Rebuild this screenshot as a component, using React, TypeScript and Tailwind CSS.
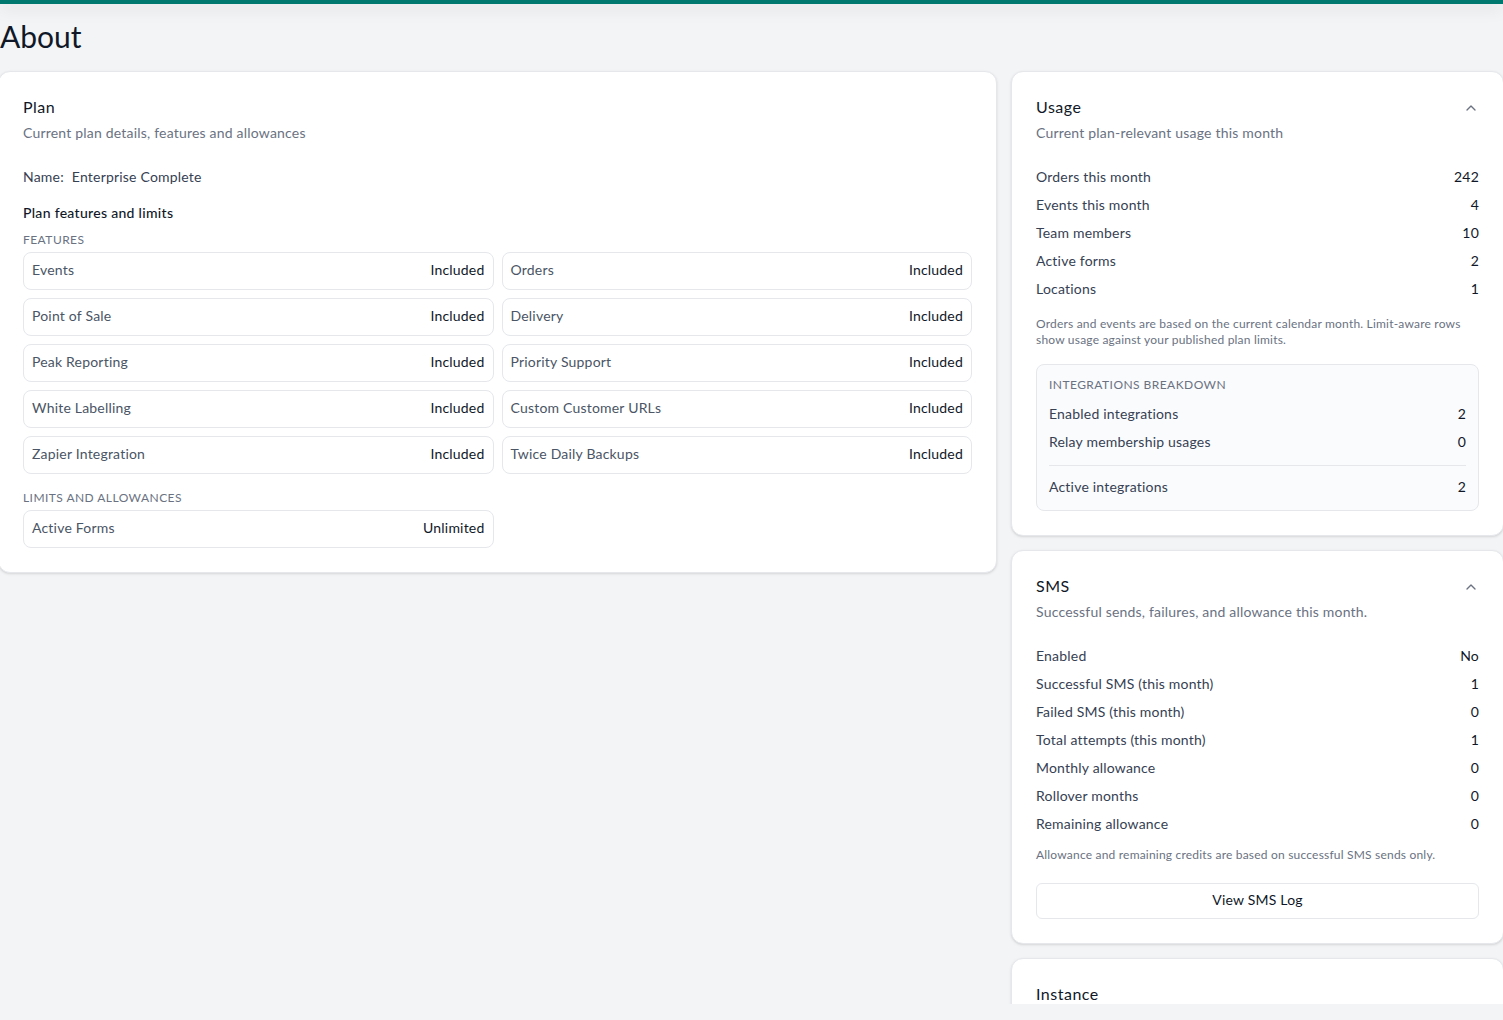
import { ChevronUp } from "lucide-react";

const FEATURES = [
  "Events",
  "Orders",
  "Point of Sale",
  "Delivery",
  "Peak Reporting",
  "Priority Support",
  "White Labelling",
  "Custom Customer URLs",
  "Zapier Integration",
  "Twice Daily Backups",
];

const USAGE = [
  ["Orders this month", "242"],
  ["Events this month", "4"],
  ["Team members", "10"],
  ["Active forms", "2"],
  ["Locations", "1"],
];

const SMS = [
  ["Enabled", "No"],
  ["Successful SMS (this month)", "1"],
  ["Failed SMS (this month)", "0"],
  ["Total attempts (this month)", "1"],
  ["Monthly allowance", "0"],
  ["Rollover months", "0"],
  ["Remaining allowance", "0"],
];

function Row({ label, value }: { label: string; value: string }) {
  return (
    <div className="flex items-center justify-between text-sm text-gray-700">
      <span>{label}</span>
      <span className="text-gray-900">{value}</span>
    </div>
  );
}

function Tile({ label, value }: { label: string; value: string }) {
  return (
    <div className="flex h-[38px] items-center justify-between rounded-lg border border-gray-200 px-2 pb-[2px] text-sm">
      <span className="text-gray-600">{label}</span>
      <span className="text-gray-900">{value}</span>
    </div>
  );
}

function CardHead({ title, sub, toggle }: { title: string; sub: string; toggle?: boolean }) {
  return (
    <div>
      <div className="flex items-center justify-between">
        <h2 className="text-base leading-[22px] tracking-[0.5px] text-gray-900">{title}</h2>
        {toggle && <ChevronUp className="mt-[2px] h-4 w-4 text-gray-500" />}
      </div>
      {sub && <p className="mt-[5px] text-sm text-gray-500">{sub}</p>}
    </div>
  );
}

export default function App() {
  return (
    <div className="flex h-[1020px] flex-col overflow-hidden bg-gray-100 font-[Lato,sans-serif] tracking-[0.2px]">
      <div className="relative z-10 h-1 shrink-0 bg-teal-700 shadow-[0_4px_16px_rgba(0,0,0,0.15)]" />
      {/* Main area stops short of the window bottom */}
      <div className="-ml-[2px] h-[1000px] w-[1506px] overflow-hidden">
        <h1 className="ml-[2px] mt-[14px] text-3xl leading-9 tracking-normal text-gray-900">About</h1>
        <div className="mt-[17px] flex items-start gap-[14px]">
          {/* Plan */}
          <section className="w-[999px] shrink-0 rounded-xl border border-gray-200 bg-white p-6 shadow-sm">
            <CardHead title="Plan" sub="Current plan details, features and allowances" />
            <div className="mt-6 text-sm text-gray-700">
              <span className="mr-2">Name:</span>
              <span>Enterprise Complete</span>
            </div>
            <h3 className="mt-4 text-sm font-medium tracking-[0.3px] text-gray-900">Plan features and limits</h3>
            <div className="mt-[9px] text-xs tracking-[0.45px] text-gray-500">FEATURES</div>
            <div className="mt-1 grid grid-cols-2 gap-2">
              {FEATURES.map((f) => (
                <Tile key={f} label={f} value="Included" />
              ))}
            </div>
            <div className="mt-4 text-xs tracking-[0.45px] text-gray-500">LIMITS AND ALLOWANCES</div>
            <div className="mt-1 grid grid-cols-2 gap-2">
              <Tile label="Active Forms" value="Unlimited" />
            </div>
          </section>

          <div className="flex w-[493px] shrink-0 flex-col gap-[14px]">
            {/* Usage */}
            <section className="rounded-xl border border-gray-200 bg-white p-6 shadow-sm">
              <CardHead title="Usage" sub="Current plan-relevant usage this month" toggle />
              <div className="mt-6 flex flex-col gap-2">
                {USAGE.map(([l, v]) => (
                  <Row key={l} label={l} value={v} />
                ))}
              </div>
              <p className="mt-[17px] text-xs text-gray-500">
                Orders and events are based on the current calendar month. Limit-aware rows show usage against your
                published plan limits.
              </p>
              <div className="mt-4 rounded-lg border border-gray-200 bg-[#fafbfd] px-3 pb-[13px] pt-3">
                <div className="text-xs tracking-[0.45px] text-gray-500">INTEGRATIONS BREAKDOWN</div>
                <div className="mt-[11px] flex flex-col gap-2">
                  <Row label="Enabled integrations" value="2" />
                  <Row label="Relay membership usages" value="0" />
                </div>
                <div className="mb-[11px] mt-[13px] border-t border-gray-200" />
                <Row label="Active integrations" value="2" />
              </div>
            </section>

            {/* SMS */}
            <section className="rounded-xl border border-gray-200 bg-white p-6 shadow-sm">
              <CardHead title="SMS" sub="Successful sends, failures, and allowance this month." toggle />
              <div className="mt-6 flex flex-col gap-2">
                {SMS.map(([l, v]) => (
                  <Row key={l} label={l} value={v} />
                ))}
              </div>
              <p className="mt-[13px] text-xs text-gray-500">
                Allowance and remaining credits are based on successful SMS sends only.
              </p>
              <button className="mt-5 h-9 w-full rounded-md border border-gray-200 bg-white pb-[2px] text-sm text-gray-900">
                View SMS Log
              </button>
            </section>

            {/* Instance */}
            <section className="rounded-xl border border-gray-200 bg-white p-6 shadow-sm">
              <CardHead title="Instance" sub="" />
              <div className="h-40" />
            </section>
          </div>
        </div>
      </div>
    </div>
  );
}
